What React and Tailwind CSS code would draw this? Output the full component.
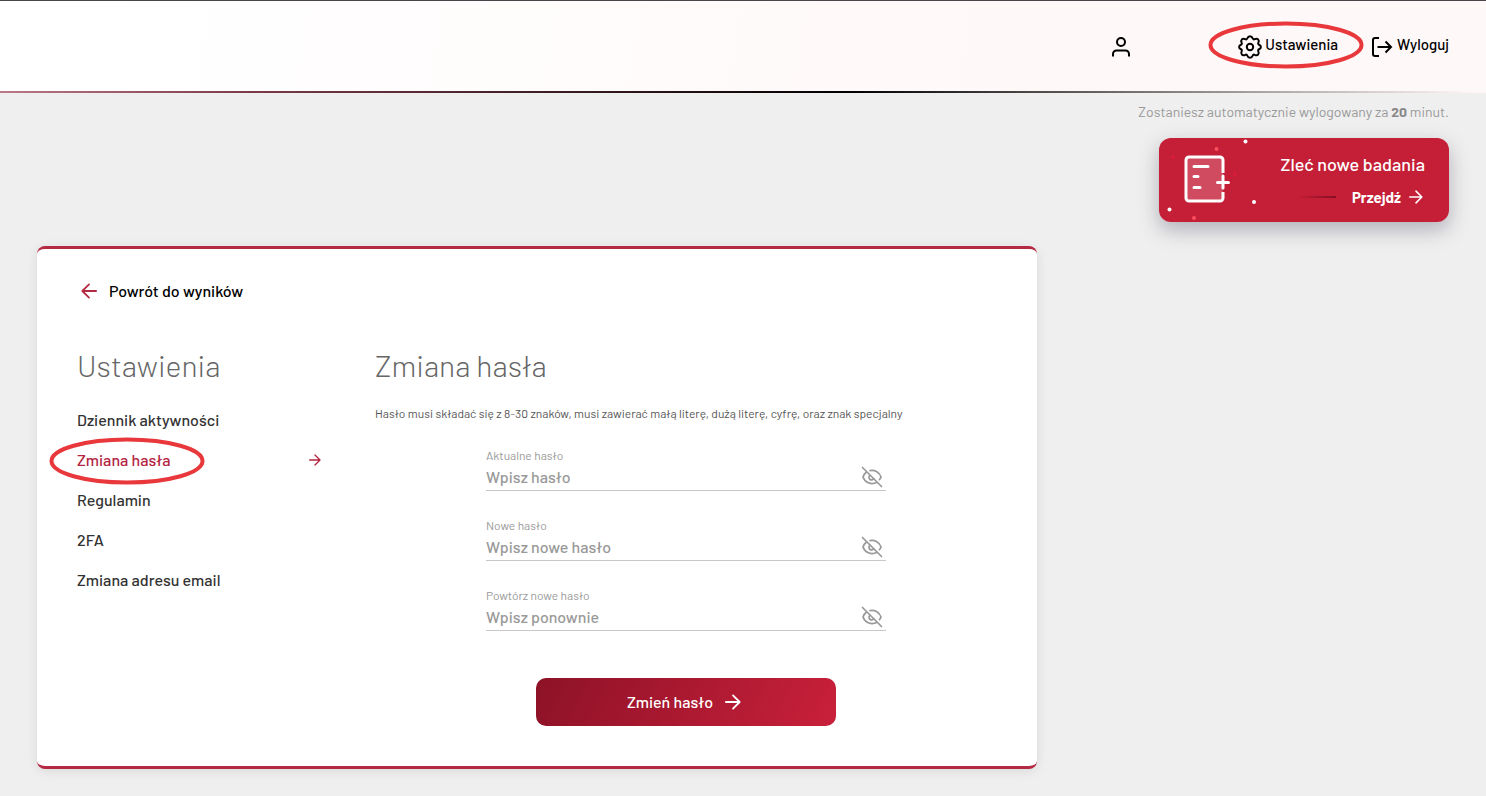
import { useState } from 'react';

const menu = [
  { id: 'dziennik', label: 'Dziennik aktywności' },
  { id: 'haslo', label: 'Zmiana hasła' },
  { id: 'regulamin', label: 'Regulamin' },
  { id: '2fa', label: '2FA' },
  { id: 'email', label: 'Zmiana adresu email' },
];

const fields = [
  { name: 'aktualne', label: 'Aktualne hasło', placeholder: 'Wpisz hasło' },
  { name: 'nowe', label: 'Nowe hasło', placeholder: 'Wpisz nowe hasło' },
  { name: 'powtorz', label: 'Powtórz nowe hasło', placeholder: 'Wpisz ponownie' },
];

function Arrow({ className, left = false }) {
  return (
    <svg className={className} viewBox="0 0 18 18" fill="none" stroke="currentColor" strokeWidth="2" strokeLinecap="round" strokeLinejoin="round" aria-hidden="true">
      <path d={left ? 'M17 9H1.5M9 1.5 1.5 9 9 16.5' : 'M1 9h15.5M9 1.5 16.5 9 9 16.5'} />
    </svg>
  );
}

function UserIcon() {
  return (
    <svg className="h-6 w-6" viewBox="0 0 24 24" fill="none" stroke="currentColor" strokeWidth="2" aria-hidden="true">
      <circle cx="12" cy="7" r="4" />
      <path d="M4 21.5V19a3.5 3.5 0 0 1 3.5-3.5h9A3.5 3.5 0 0 1 20 19v2.5" />
    </svg>
  );
}

function GearIcon() {
  return (
    <svg className="h-6 w-6 shrink-0" viewBox="0 0 24 24" fill="none" stroke="currentColor" strokeWidth="2" strokeLinejoin="round" aria-hidden="true">
      <circle cx="12" cy="12" r="3.2" />
      <path d="M9.200 3.500C9.800 2 10.800 1.200 12 1.200S14.200 2 14.800 3.500c.3.800 1 1.100 1.800.7 1.500-.7 2.700-.6 3.500.2s.9 2 .2 3.500c-.4.800-.1 1.500.7 1.800 1.300.5 1.900 1.300 1.900 2.300s-.6 1.800-1.900 2.300c-.8.300-1.100 1-.7 1.800.7 1.500.6 2.700-.2 3.500s-2 .9-3.500.2c-.8-.4-1.500-.1-1.800.7-.6 1.500-1.600 2.300-2.800 2.300S9.800 22 9.200 20.500c-.3-.8-1-1.100-1.800-.7-1.500.7-2.700.6-3.500-.2s-.9-2-.2-3.500c.4-.8.1-1.500-.7-1.800C1.700 13.800 1.100 13 1.100 12s.6-1.800 1.900-2.300c.8-.3 1.100-1 .7-1.800C3 6.400 3.100 5.200 3.900 4.400s2-.9 3.500-.2c.8.400 1.500.1 1.800-.7z" />
    </svg>
  );
}

function LogoutIcon() {
  return (
    <svg className="h-6 w-6 shrink-0" viewBox="0 0 24 24" fill="none" stroke="currentColor" strokeWidth="2" aria-hidden="true">
      <path d="M10 3H6a2 2 0 0 0-2 2v14a2 2 0 0 0 2 2h4" />
      <path d="M8.500 12H22M16.500 6.500 22 12l-5.500 5.500" />
    </svg>
  );
}

function EyeOffIcon() {
  return (
    <svg className="h-6 w-6" viewBox="0 0 24 24" fill="none" stroke="currentColor" strokeWidth="1.700" strokeLinecap="round" aria-hidden="true">
      <path d="M2.500 2.500 21.500 21.500" />
      <path d="M10 5.600c5-.9 9.500 1.900 11 6.400-.3 1-.9 1.900-1.600 2.700M6.300 7.200C4.700 8.400 3.500 10.100 3 12c1.700 5.300 7.900 8.200 13.600 5.600" />
      <path d="M9.800 10.400a2.600 2.600 0 1 0 3.900 3.400" />
    </svg>
  );
}

// Tło kafelka: dokument z plusem i rozsypane kropki
function OrderArt() {
  return (
    <svg className="h-[84px] w-[104px] shrink-0" viewBox="0 0 104 84" fill="none" aria-hidden="true">
      <rect x="27" y="19" width="37" height="44" rx="3" fill="#fff" fillOpacity=".2" />
      <path d="M64 35V22a3 3 0 0 0-3-3H30a3 3 0 0 0-3 3v38a3 3 0 0 0 3 3h31a3 3 0 0 0 3-3v-6" stroke="#fff" strokeWidth="3" />
      <path d="M64 38v12M58.500 44.500h11" stroke="#fff" strokeWidth="3" strokeLinecap="round" />
      <path d="M35 28.500h14M35 38.500h4M35 49.500h6" stroke="#fff" strokeWidth="3" strokeLinecap="round" />
      <circle cx="86.500" cy="3.500" r="2" fill="#fff" />
      <circle cx="95" cy="64" r="2" fill="#fff" />
      <circle cx="10.500" cy="71.500" r="2" fill="#fff" />
      <circle cx="57.500" cy="11" r="2" fill="#fb4f5c" />
      <circle cx="35" cy="80" r="2" fill="#fb4f5c" />
      <circle cx="14" cy="19" r="2" fill="#d81c3a" />
      <circle cx="76" cy="36" r="2" fill="#d81c3a" />
    </svg>
  );
}

function Ring({ className }) {
  return (
    <svg className={`pointer-events-none absolute h-12 w-[156px] ${className}`} viewBox="0 0 156 48" fill="none" aria-hidden="true">
      <ellipse cx="78" cy="24" rx="75.500" ry="21.500" stroke="#e9383c" strokeWidth="4" />
    </svg>
  );
}

function PasswordField({ field }) {
  const [visible, setVisible] = useState(false);

  return (
    <div className="border-b border-[#c8c8c8]">
      <label htmlFor={field.name} className="mb-0.5 block text-xs leading-[14px] text-[#999]">{field.label}</label>
      <div className="flex h-[26px] items-center pr-0.5">
        <input
          id={field.name}
          name={field.name}
          type={visible ? 'text' : 'password'}
          placeholder={field.placeholder}
          className="min-w-0 flex-1 bg-transparent text-base font-medium text-[#333] outline-none placeholder:text-[#999]"
        />
        <button type="button" aria-label="Pokaż hasło" onClick={() => setVisible(!visible)} className="text-[#999]">
          <EyeOffIcon />
        </button>
      </div>
    </div>
  );
}

export default function App() {
  const [active, setActive] = useState('haslo');

  return (
    <div className="min-h-screen bg-[#efefef] font-[Barlow,Roboto,sans-serif] text-black">
      <header className="border-t border-[#48444a] bg-[linear-gradient(100deg,#fff_8%,#fff8f8_70%)]">
        <div className="flex h-[90px] items-center justify-end px-[37px] pt-0.5">
          <button type="button" aria-label="Konto" className="mr-[105px]"><UserIcon /></button>
          <a href="#ustawienia" className="relative mr-[31px] flex items-center gap-[3px] text-[15px] leading-5 font-medium">
            <GearIcon />
            <span className="pb-1.5">Ustawienia</span>
            <Ring className="-top-[13px] -left-[30px]" />
          </a>
          <a href="#wyloguj" className="flex items-center gap-1 text-[15px] leading-5 font-medium">
            <LogoutIcon />
            <span className="pb-1.5">Wyloguj</span>
          </a>
        </div>
        <div className="h-0.5 bg-[linear-gradient(90deg,#b87a85,#7a3a4b_17%,#000_57%,#fff6f6_99%)]" />
      </header>

      <main className="px-[37px] pb-7">
        <p className="pt-[7px] text-right text-sm leading-6 text-[#999]">
          Zostaniesz automatycznie wylogowany za <strong className="text-[#888]">20</strong> minut.
        </p>

        <div className="mt-[14px] flex justify-end">
          <a href="#zlec" className="flex h-[84px] w-[290px] items-start justify-between overflow-hidden rounded-xl bg-[#c51f38] pr-6 text-white shadow-[0_8px_20px_#6a697c77]">
            <OrderArt />
            <span className="flex flex-col items-end gap-[9px] pt-[14px]">
              <span className="text-lg leading-6 font-medium">Zleć nowe badania</span>
              <span className="flex items-center pr-0.5 text-[15px] leading-6 font-bold">
                <span className="mr-4 h-0.5 w-10 bg-linear-to-r from-transparent to-[#860f22]" />
                Przejdź
                <Arrow className="ml-2 h-3.5 w-3.5" />
              </span>
            </span>
          </a>
        </div>

        <section className="mt-6 w-full max-w-[1000px] rounded-lg border-y-3 border-[#b52a43] bg-white px-10 pt-[30px] pb-10 shadow-[0_2px_12px_#00000018]">
          <a href="#wyniki" className="inline-flex items-center gap-3 pl-1 text-base leading-6 font-medium">
            <Arrow left className="h-4 w-4 text-[#b52a43]" />
            Powrót do wyników
          </a>

          <div className="mt-10 flex gap-[54px]">
            <nav className="w-[244px] shrink-0">
              <h2 className="text-3xl leading-10 font-light text-[#666]">Ustawienia</h2>
              <ul className="mt-[15px]">
                {menu.map((item) => (
                  <li key={item.id}>
                    <button
                      type="button"
                      onClick={() => setActive(item.id)}
                      className={`flex h-10 w-full items-center justify-between text-left text-base font-medium ${active === item.id ? 'text-[#b3243f]' : 'text-[#333]'}`}
                    >
                      <span className="relative">
                        {item.label}
                        {active === item.id && <Ring className="-top-[11px] -left-7" />}
                      </span>
                      {active === item.id && <Arrow className="h-3 w-3" />}
                    </button>
                  </li>
                ))}
              </ul>
            </nav>

            <div className="min-w-0 flex-1">
              <h1 className="text-3xl leading-10 font-light text-[#666]">Zmiana hasła</h1>
              <p className="mt-4 text-xs leading-6 text-[#555]">
                Hasło musi składać się z 8-30 znaków, musi zawierać małą literę, dużą literę, cyfrę, oraz znak specjalny
              </p>
              <form className="mx-auto mt-[23px] flex w-[400px] flex-col gap-[27px]" onSubmit={(e) => e.preventDefault()}>
                {fields.map((field) => (
                  <PasswordField key={field.name} field={field} />
                ))}
                <button type="submit" className="mx-auto mt-5 flex h-12 w-[300px] items-center justify-center gap-3 rounded-[10px] bg-[linear-gradient(115deg,#8d1226,#c9203b)] pr-1 text-base font-medium text-white">
                  Zmień hasło
                  <Arrow className="h-4 w-4" />
                </button>
              </form>
            </div>
          </div>
        </section>
      </main>
    </div>
  );
}
